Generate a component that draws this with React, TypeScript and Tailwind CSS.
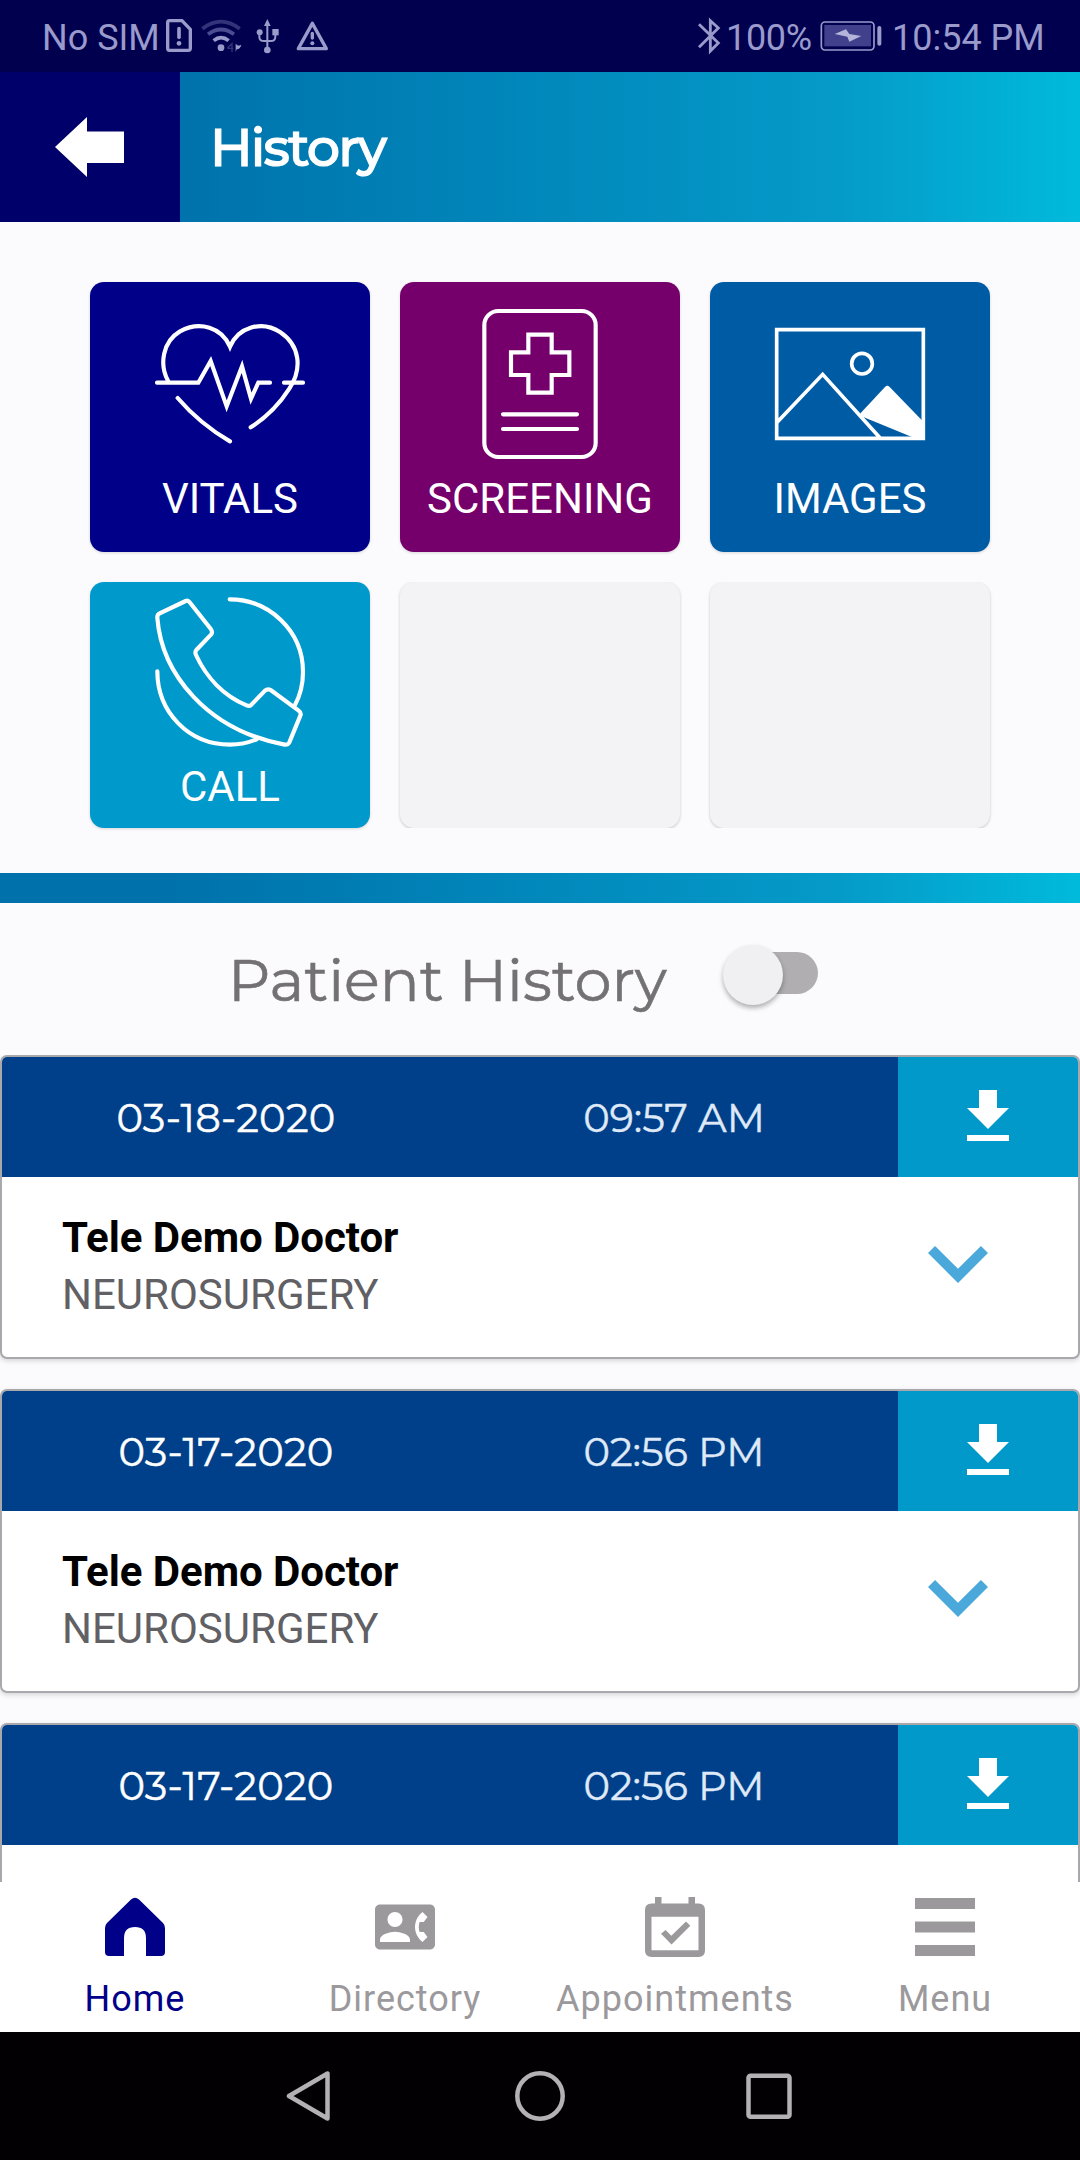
import type { ReactNode } from "react";

const GEO = "font-['Montserrat','Inter',sans-serif]";

function StatusBar() {
  return (
    <div className="flex h-[72px] shrink-0 items-center bg-[#00004f] pl-[42px] pr-[42px] text-[36px] leading-[42px] text-[#9a9acb]">
      <span className="w-[123px] whitespace-nowrap pt-[3px]">No SIM</span>
      <svg className="h-[40px] w-[170px] shrink-0" viewBox="495 48 510 120" fill="none" stroke="#9a9acb">
        <path d="M508 62h38l25 26v57q0 6-6 6h-57q-5 0-5-6V68q0-6 5-6z" strokeWidth="10" />
        <path d="M537 86v26" strokeWidth="11" strokeLinecap="round" />
        <circle cx="537" cy="130" r="7" fill="#9a9acb" stroke="none" />
        <path d="M607 86Q663 44 719 86" stroke="#33337a" strokeWidth="11" />
        <path d="M624 103Q663 74 702 103" stroke="#4b4b92" strokeWidth="11" />
        <path d="M641 122Q663 104 686 122" strokeWidth="11" />
        <circle cx="663" cy="143" r="10" fill="#9a9acb" stroke="none" />
        <path d="M682 145l14-14v25M682 145h18" stroke="#33337a" strokeWidth="4" />
        <path d="M707 131v25l3-8q12-2 14-14q-8 4-12 2z" fill="#9a9acb" stroke="none" />
        <path d="M802 74v68M778 98v12q0 13 14 13h20q14 0 14-13V98" strokeWidth="6" />
        <path d="M802 57l10 21h-20z" fill="#9a9acb" stroke="none" />
        <circle cx="779" cy="97" r="9" fill="#9a9acb" stroke="none" />
        <path d="M817 87h19v19h-19z" fill="#9a9acb" stroke="none" />
        <circle cx="802" cy="150" r="10" fill="#9a9acb" stroke="none" />
        <path d="M937 70l42 76h-84z" strokeWidth="10" strokeLinejoin="round" />
        <path d="M937 100v14" strokeWidth="10" strokeLinecap="round" />
        <circle cx="937" cy="130" r="6" fill="#9a9acb" stroke="none" />
      </svg>
      <div className="flex-1" />
      <svg className="h-[40px] w-[28px] shrink-0" viewBox="105 50 84 120" fill="none" stroke="#9a9acb" strokeWidth="8.500">
        <path d="M114 75l58 56-24 24V64l24 22-58 58" />
      </svg>
      <span className="w-[96px] whitespace-nowrap pl-[2px] pt-[3px] tracking-[-0.300px]">100%</span>
      <svg className="h-[32px] w-[64px] shrink-0" viewBox="480 62 192 96" fill="none">
        <rect x="484" y="68" width="158" height="84" rx="11" stroke="#9a9acb" strokeWidth="5" />
        <rect x="493" y="77" width="140" height="64" fill="#40408c" />
        <path d="M524 104l34-14 10 14 36 6-36 17-6-15z" fill="#b5b5dc" />
        <path d="M658 86v47" stroke="#9a9acb" strokeWidth="12" strokeLinecap="round" />
      </svg>
      <span className="w-[154px] whitespace-nowrap pl-[8px] pt-[3px]">10:54 PM</span>
    </div>
  );
}

function Header() {
  return (
    <header className="flex h-[150px] shrink-0 bg-linear-to-r from-[#0071ab] from-15% via-[#059bc9] via-78% to-[#00badc] to-100%">
      <button className="flex w-[180px] items-center justify-center bg-[#00006b] pr-[3px]" aria-label="Back">
        <svg className="h-[60px] w-[70px]" viewBox="0 0 70 60" fill="white">
          <path d="M1 30L33 0V14.500H70V46H33V60z" />
        </svg>
      </button>
      <h1 className={`${GEO} pl-[30px] text-[52.500px] font-medium leading-[151px] tracking-[-1.900px] text-white [-webkit-text-stroke:1.200px_white]`}>History</h1>
    </header>
  );
}

function Tile({ color, label, icon, short }: { color: string; label: string; icon: ReactNode; short?: boolean }) {
  return (
    <button className={`${color} flex flex-col items-center overflow-hidden rounded-[14px] shadow-[0_1px_3px_rgba(0,0,0,0.15)]`}>
      <svg
        className={short ? "h-[180px] w-[280px] shrink-0" : "h-[192px] w-[280px] shrink-0"}
        viewBox={short ? "30 36 840 540" : "30 36 840 576"}
        fill="none"
        stroke="white"
        strokeWidth="12.500"
        strokeLinecap="round"
      >
        {icon}
      </svg>
      <span className="text-[42px] leading-[50px] text-white">{label}</span>
    </button>
  );
}

function EmptyTile() {
  return (
    <div className="overflow-y-clip">
      <div className="h-[246px] rounded-[14px] bg-[#f3f2f4] shadow-[0_1px_3px_rgba(0,0,0,0.22)]" />
    </div>
  );
}

function Tiles() {
  return (
    <div className="grid h-[651px] shrink-0 grid-cols-3 grid-rows-[270px_246px] content-start gap-[30px] px-[90px] pt-[60px]">
      <Tile
        color="bg-[#000089]"
        label="VITALS"
        icon={
          <>
            <path d="M264 332C238 285 247 215 300 184C360 152 425 172 450 230C475 172 545 150 600 186C660 226 668 295 628 356Q582 428 512 472" />
            <path d="M231 338H355L392 273L440 409L486 289L513 386L535 338H570M612 338H669M293 384Q360 462 450 514" />
          </>
        }
      />
      <Tile
        color="bg-[#75006b]"
        label="SCREENING"
        icon={
          <>
            <rect x="283" y="123" width="334" height="438" rx="42" />
            <path d="M415 194h70v53h53v68h-53v53h-70v-53h-52v-68h52zM339 433h222M339 477h222" />
          </>
        }
      />
      <Tile
        color="bg-[#005ba5]"
        label="IMAGES"
        icon={
          <>
            <path d="M230 179H670V505H230zM230 458L368 313L541 505" strokeWidth="11" strokeLinecap="butt" />
            <circle cx="486" cy="281" r="31" strokeWidth="11" />
            <path d="M480 431L555 351Q562 344 569 351L670 455V505H645L488 440z" fill="white" stroke="none" />
          </>
        }
      />
      <Tile
        short
        color="bg-[#0099cb]"
        label="CALL"
        icon={
          <>
            <path d="M449 88C565 88 669 180 669 306Q669 360 645 405M232 304C232 425 325 524 450 524Q490 524 530 508" />
            <path
              d="M317 93Q324 90 329 97L393 178Q399 187 393 194L349 240Q344 246 348 255C378 320 430 377 500 406Q508 410 514 404L555 362Q563 355 572 360L656 422Q665 429 661 437L628 517Q624 525 614 524C380 480 245 310 232 144Q231 134 239 130Z"
              strokeLinejoin="round"
            />
          </>
        }
      />
      <EmptyTile />
      <EmptyTile />
    </div>
  );
}

function HistoryTitle() {
  return (
    <div className="flex h-[152px] shrink-0 pl-[228px]">
      <h2 className={`${GEO} w-[495px] whitespace-nowrap pt-[39px] text-[59px] leading-[76px] text-[#737174] [-webkit-text-stroke:0.600px_#737174]`}>Patient History</h2>
      <button className="mt-[49px] flex h-[42px] w-[95px] items-center rounded-full bg-linear-to-r from-transparent from-25% to-[#b0aeb1] to-25%" role="switch" aria-checked="false" aria-label="Patient History">
        <span className="mt-[3px] size-[60px] shrink-0 rounded-full bg-[#f0eff1] shadow-[0_3px_5px_rgba(0,0,0,0.3)]" />
      </button>
    </div>
  );
}

function Card({ date, time, doctor, specialty }: { date: string; time: string; doctor?: string; specialty?: string }) {
  return (
    <article className="h-[304px] shrink-0 overflow-hidden rounded-[7px] border-2 border-[#a9a9ad] bg-white shadow-[0_2px_5px_rgba(0,0,0,0.15)]">
      <div className={`${GEO} flex h-[120px] text-[40px] leading-[121px]`}>
        <div className="flex flex-1 bg-[#003f89] text-center">
          <span className="flex-1 tracking-[0.300px] text-white [-webkit-text-stroke:0.500px_white]">{date}</span>
          <span className="flex-1 tracking-[-0.100px] text-[#dfe9f7] [-webkit-text-stroke:0.400px_#dfe9f7]">{time}</span>
        </div>
        <button className="flex w-[180px] items-center justify-center bg-[#0099c9]" aria-label="Download">
          <svg className="size-[72px]" viewBox="0 0 24 24" fill="white">
            <path d="M19 9h-4V3H9v6H5l7 7 7-7zM5 18v2h14v-2z" />
          </svg>
        </button>
      </div>
      {doctor && (
        <div className="flex justify-between px-[60px] pt-[26px]">
          <div className="pt-[6px] text-[42px]">
            <p className="font-bold leading-[57px] tracking-[-0.050px] text-black">{doctor}</p>
            <p className="leading-[57px] text-[#616064]">{specialty}</p>
          </div>
          <svg className="size-[120px]" viewBox="0 0 24 24" fill="#4ba8da">
            <path d="M16.590 8.590L12 13.170 7.410 8.590 6 10l6 6 6-6z" />
          </svg>
        </div>
      )}
    </article>
  );
}

function NavItem({ label, active, icon }: { label: string; active?: boolean; icon: ReactNode }) {
  return (
    <button className={`${active ? "text-[#000089]" : "text-[#9b999c]"} flex flex-1 flex-col items-center pt-[14px]`}>
      <svg className="h-[62px] w-[60px]" viewBox="0 0 60 62" fill="currentColor">
        {icon}
      </svg>
      <span className="mt-[20px] text-[36px] leading-[42px] tracking-[1px]">{label}</span>
    </button>
  );
}

function BottomNav() {
  return (
    <nav className="flex h-[150px] shrink-0 bg-white">
      <NavItem
        active
        label="Home"
        icon={<path d="M26 3.500Q30 0 34 3.500L58 27Q60 29 60 32V56Q60 60 56 60H41V42Q41 31 30 31T19 42V60H4Q0 60 0 56V32Q0 29 2 27z" />}
      />
      <NavItem
        label="Directory"
        icon={
          <g transform="translate(0 1) scale(2.500)">
            <path d="M22 3H2C.9 3 0 3.900 0 5v14c0 1.100.9 2 2 2h20c1.100 0 1.990-.9 1.990-2L24 5c0-1.100-.9-2-2-2zM8 6c1.660 0 3 1.340 3 3s-1.340 3-3 3-3-1.340-3-3 1.340-3 3-3zm6 12H2v-1c0-2 4-3.100 6-3.100s6 1.100 6 3.100v1zm3.850-4h1.640L21 16l-1.990 1.990c-1.310-.98-2.280-2.380-2.730-3.990-.18-.64-.28-1.310-.28-2s.1-1.360.28-2c.45-1.620 1.420-3.010 2.730-3.990L21 8l-1.510 2h-1.640c-.22.630-.35 1.300-.35 2s.13 1.370.35 2z" />
          </g>
        }
      />
      <NavItem
        label="Appointments"
        icon={
          <>
            <path fillRule="evenodd" d="M10 1h6.500v6.500H43.500V1H50v6.500h3.500Q60 7.500 60 14V54.500Q60 61 53.500 61H6.500Q0 61 0 54.500V14Q0 7.500 6.500 7.500H10zM6.500 20.700V54.300H53.500V20.700z" />
            <path d="M16 37.700l4.600-3.600 5.700 5.600L41 25.500l4.300 4.200L26.500 48.500z" />
          </>
        }
      />
      <NavItem label="Menu" icon={<path d="M0 2h60v11H0zM0 25.500h60v11H0zM0 49h60v11H0z" />} />
    </nav>
  );
}

function SystemNav() {
  return (
    <div className="flex h-[128px] shrink-0 items-center justify-center gap-[180px] bg-[#020003]">
      <svg className="size-[50px]" viewBox="0 0 50 50" fill="none" stroke="#b3b1b3" strokeWidth="4.500" strokeLinejoin="round">
        <path d="M4 25L42.500 2.500V47.500z" />
      </svg>
      <svg className="size-[50px]" viewBox="0 0 50 50" fill="none" stroke="#b3b1b3" strokeWidth="4.500">
        <circle cx="25" cy="25" r="22.700" />
      </svg>
      <svg className="size-[50px]" viewBox="0 0 50 50" fill="none" stroke="#b3b1b3" strokeWidth="4.500">
        <rect x="3.500" y="4.700" width="41" height="41" rx="2" />
      </svg>
    </div>
  );
}

export default function App() {
  return (
    <div className="flex h-[2160px] w-[1080px] flex-col overflow-hidden bg-[#fbfafc] font-['Roboto',sans-serif]">
      <StatusBar />
      <Header />
      <Tiles />
      <div className="h-[30px] shrink-0 bg-linear-to-r from-[#0071ab] from-15% via-[#059bc9] via-78% to-[#00badc] to-100%" />
      <HistoryTitle />
      <main className="flex min-h-0 flex-1 flex-col gap-[30px] overflow-hidden">
        <Card date="03-18-2020" time="09:57 AM" doctor="Tele Demo Doctor" specialty="NEUROSURGERY" />
        <Card date="03-17-2020" time="02:56 PM" doctor="Tele Demo Doctor" specialty="NEUROSURGERY" />
        <Card date="03-17-2020" time="02:56 PM" />
      </main>
      <BottomNav />
      <SystemNav />
    </div>
  );
}
